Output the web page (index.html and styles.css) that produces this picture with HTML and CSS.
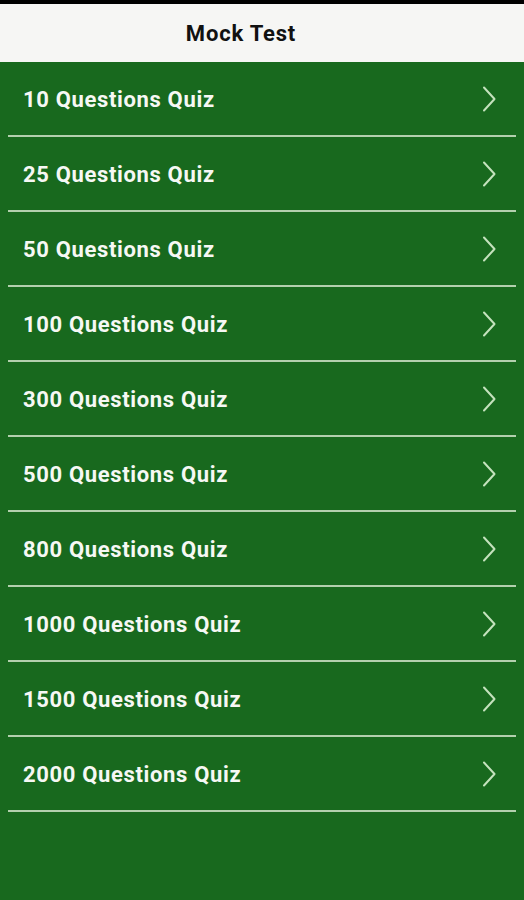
FILE: index.html
```html
<!DOCTYPE html>
<html>
<head>
<meta charset="utf-8">
<link rel="stylesheet" href="styles.css">
</head>
<body>
<div class="statusbar"></div>
<header class="appbar"><span class="title">Mock Test</span></header>
<ul class="quiz-list">
  <li class="quiz-item"><span class="label">10 Questions Quiz</span><svg class="chev" viewBox="0 0 14 26"><path d="M2 1.5 L12.5 13 L2 24.5"/></svg></li>
  <li class="quiz-item"><span class="label">25 Questions Quiz</span><svg class="chev" viewBox="0 0 14 26"><path d="M2 1.5 L12.5 13 L2 24.5"/></svg></li>
  <li class="quiz-item"><span class="label">50 Questions Quiz</span><svg class="chev" viewBox="0 0 14 26"><path d="M2 1.5 L12.5 13 L2 24.5"/></svg></li>
  <li class="quiz-item"><span class="label">100 Questions Quiz</span><svg class="chev" viewBox="0 0 14 26"><path d="M2 1.5 L12.5 13 L2 24.5"/></svg></li>
  <li class="quiz-item"><span class="label">300 Questions Quiz</span><svg class="chev" viewBox="0 0 14 26"><path d="M2 1.5 L12.5 13 L2 24.5"/></svg></li>
  <li class="quiz-item"><span class="label">500 Questions Quiz</span><svg class="chev" viewBox="0 0 14 26"><path d="M2 1.5 L12.5 13 L2 24.5"/></svg></li>
  <li class="quiz-item"><span class="label">800 Questions Quiz</span><svg class="chev" viewBox="0 0 14 26"><path d="M2 1.5 L12.5 13 L2 24.5"/></svg></li>
  <li class="quiz-item"><span class="label">1000 Questions Quiz</span><svg class="chev" viewBox="0 0 14 26"><path d="M2 1.5 L12.5 13 L2 24.5"/></svg></li>
  <li class="quiz-item"><span class="label">1500 Questions Quiz</span><svg class="chev" viewBox="0 0 14 26"><path d="M2 1.5 L12.5 13 L2 24.5"/></svg></li>
  <li class="quiz-item"><span class="label">2000 Questions Quiz</span><svg class="chev" viewBox="0 0 14 26"><path d="M2 1.5 L12.5 13 L2 24.5"/></svg></li>
</ul>
</body>
</html>
```
FILE: styles.css
```css
html, body {
  margin: 0;
  padding: 0;
}
body {
  background: #18691e;
  font-family: Roboto, "Liberation Sans", sans-serif;
  width: 524px;
  height: 900px;
  overflow: hidden;
}
.statusbar {
  height: 4px;
  background: #000;
}
.appbar {
  height: 58px;
  background: #f6f6f4;
  display: flex;
  align-items: center;
  justify-content: center;
  padding-right: 42px;
}
.title {
  font-size: 22px;
  font-weight: 700;
  letter-spacing: 0.8px;
  color: #111;
  padding-top: 1px;
}
.quiz-list {
  list-style: none;
  margin: 0;
  padding: 0;
}
.quiz-item {
  height: 73px;
  margin: 0 8px;
  border-bottom: 2px solid #b3d0ae;
  display: flex;
  align-items: center;
  justify-content: space-between;
  padding: 0 20px 0 15px;
}
.label {
  color: #f6f8f4;
  font-size: 22px;
  font-weight: 700;
  letter-spacing: 0.65px;
  padding-top: 1px;
}
.chev {
  width: 14px;
  height: 26px;
  fill: none;
  stroke: #c4e2bd;
  stroke-width: 2;
  stroke-linecap: round;
  stroke-linejoin: round;
}
```
